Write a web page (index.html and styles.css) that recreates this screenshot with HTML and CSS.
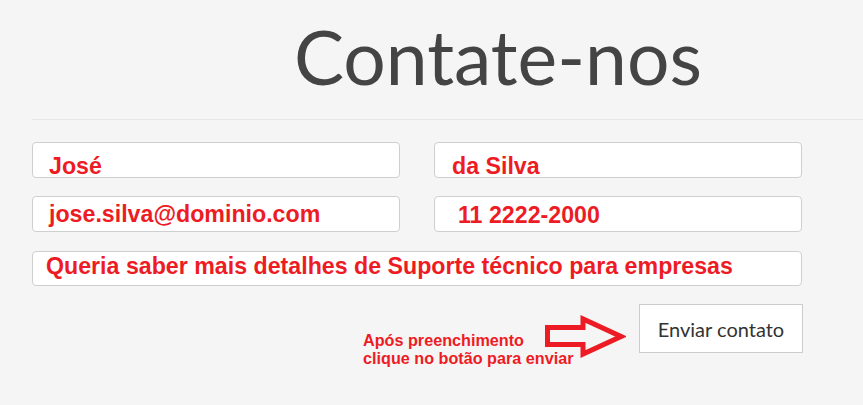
FILE: index.html
```html
<!DOCTYPE html>
<html lang="pt-BR">
<head>
    <meta charset="UTF-8">
    <meta name="viewport" content="width=device-width, initial-scale=1.0">
    <title>Contate-nos</title>
    <link rel="stylesheet" href="styles.css">
</head>
<body>
    <div class="page">
        <header class="page-header">
            <h1>Contate-nos</h1>
        </header>

        <!-- Contact form -->
        <form class="contact-form" onsubmit="return false">
            <div class="field row-1">José</div>
            <div class="field row-1 pad-wide">da Silva</div>
            <div class="field row-2">jose.silva@dominio.com</div>
            <div class="field row-2 phone">11 2222-2000</div>
            <div class="field row-3 full">Queria saber mais detalhes de Suporte técnico para empresas</div>

            <div class="actions">
                <div class="note">
                    Após preenchimento<br>
                    clique no botão para enviar
                    <svg class="note-arrow" width="84" height="45" viewBox="0 0 84 45">
                        <path d="M5.5 13.5 H41 V5 L79 22.5 L41 40 V30.5 H5.5 Z" fill="none" stroke="#ed1c24" stroke-width="5" stroke-linejoin="miter"/>
                    </svg>
                </div>
                <button type="submit" class="btn-send">Enviar contato</button>
            </div>
        </form>
    </div>
</body>
</html>
```

FILE: styles.css
```css
body {
    margin: 0;
    padding: 0;
    background-color: #f5f5f5;
    font-family: 'Lato', sans-serif;
    color: #444;
}

.page {
    padding-left: 32px;
}

.page-header {
    border-bottom: 1px solid #e6e6e6;
    padding: 11px 0 18px 262px;
}

.page-header h1 {
    margin: 0;
    font-size: 75px;
    font-weight: 400;
    line-height: normal;
    color: #444;
}

.contact-form {
    width: 770px;
    margin-top: 22px;
    display: grid;
    grid-template-columns: 368px 368px;
    column-gap: 34px;
    row-gap: 18px;
}

.field {
    box-sizing: border-box;
    height: 36px;
    overflow: hidden;
    background: white;
    border: 1px solid #cfcfcf;
    border-radius: 4px;
    padding: 10px 16px 0;
    font-family: 'Liberation Sans', Arial, sans-serif;
    font-size: 23.2px;
    font-weight: bold;
    line-height: 26px;
    color: #ed1c24;
    white-space: nowrap;
}

.field.pad-wide {
    padding-left: 17px;
}

.field.row-2 {
    padding-top: 4px;
}

.field.phone {
    padding-top: 5px;
    padding-left: 23px;
}

.field.row-3 {
    height: 35px;
    padding-top: 1px;
    padding-left: 13px;
    margin-top: 1px;
}

.field.full {
    grid-column: 1 / -1;
}

.actions {
    grid-column: 1 / -1;
    display: flex;
    justify-content: flex-end;
    align-items: flex-start;
}

.note {
    position: relative;
    width: 263px;
    margin-top: 27px;
    margin-right: 13px;
    font-family: 'Liberation Sans', Arial, sans-serif;
    font-size: 16.2px;
    font-weight: bold;
    line-height: 18px;
    color: #ed1c24;
}

.note-arrow {
    position: absolute;
    right: 0;
    top: -17px;
}

.btn-send {
    box-sizing: border-box;
    width: 164px;
    height: 49px;
    margin-right: -1px;
    padding: 0;
    background: white;
    border: 1px solid #cccccc;
    border-radius: 0;
    font-family: 'Lato', sans-serif;
    font-size: 20px;
    color: #333;
    cursor: pointer;
}
```
